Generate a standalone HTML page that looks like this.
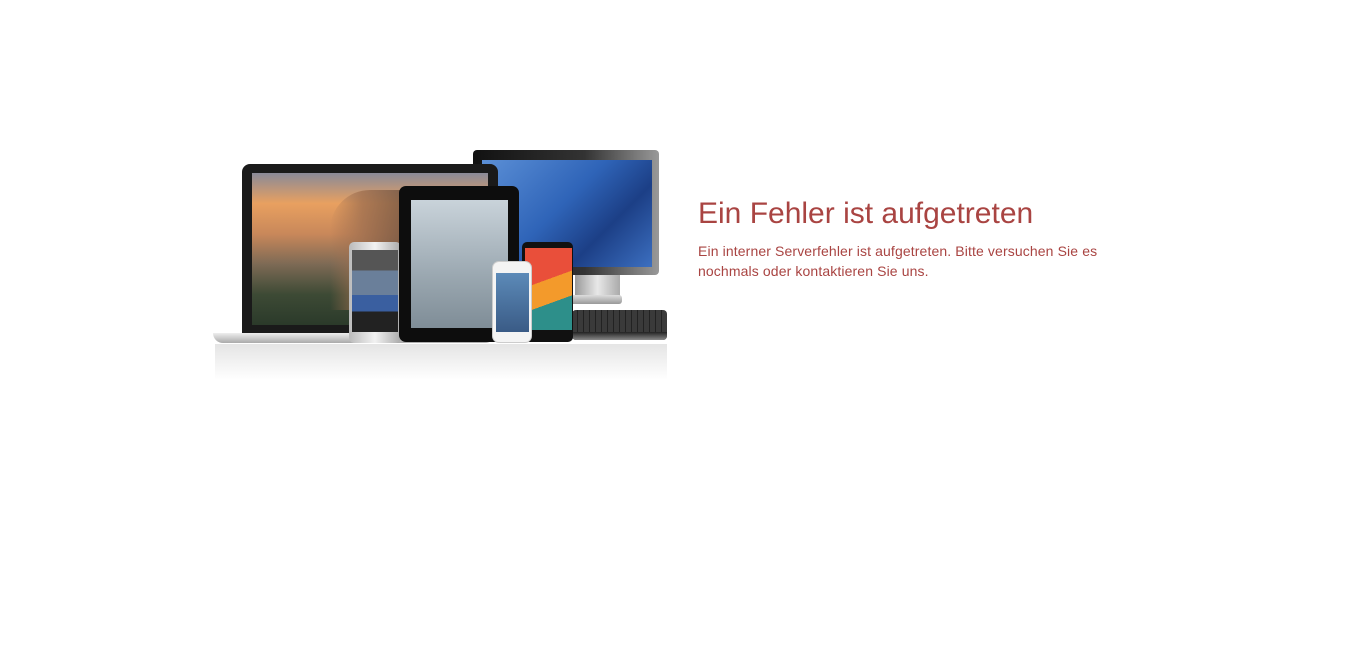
<!DOCTYPE html>
<html><head><meta charset="utf-8"><style>
html,body{margin:0;padding:0;background:#fff;width:1366px;height:659px;overflow:hidden;font-family:"Liberation Sans",Arial,sans-serif}
.a{position:absolute}
h1{position:absolute;left:698px;top:195px;margin:0;font-size:30px;font-weight:normal;color:#a94442;line-height:38px;white-space:nowrap}
p{position:absolute;left:698px;top:241px;margin:0;font-size:14px;line-height:20px;color:#a94442;width:430px;letter-spacing:0.12px}
</style></head><body>
<!-- reflection -->
<div class="a" style="left:215px;top:344px;width:452px;height:36px;background:linear-gradient(#d9d9d9,#fff);opacity:.7"></div>
<!-- monitor -->
<div class="a" style="left:575px;top:272px;width:45px;height:26px;background:linear-gradient(90deg,#999,#e8e8e8,#aaa)"></div>
<div class="a" style="left:560px;top:295px;width:62px;height:9px;border-radius:3px;background:linear-gradient(#ddd,#999)"></div>
<div class="a" style="left:473px;top:150px;width:186px;height:125px;border-radius:4px;background:linear-gradient(90deg,#111,#333 60%,#999)"></div>
<div class="a" style="left:482px;top:160px;width:170px;height:107px;background:linear-gradient(135deg,#5b8fd6,#2f64b8 45%,#1c3f86 70%,#3c6fc0)"></div>
<!-- keyboard -->
<div class="a" style="left:572px;top:310px;width:95px;height:30px;border-radius:4px;background:repeating-linear-gradient(90deg,#3a3a3a 0 5px,#222 5px 6px),#333"></div>
<div class="a" style="left:572px;top:332px;width:95px;height:8px;border-radius:0 0 4px 4px;background:linear-gradient(#222,#888)"></div>
<!-- laptop -->
<div class="a" style="left:242px;top:164px;width:256px;height:170px;border-radius:8px 8px 0 0;background:#1a1a1a"></div>
<div class="a" style="left:252px;top:173px;width:236px;height:152px;background:linear-gradient(180deg,#8a8a98 0%,#e8a060 20%,#c9885a 40%,#7d6a55 60%,#3d4a35 80%,#2b3a2a 100%)"></div>
<div class="a" style="left:330px;top:190px;width:80px;height:120px;background:linear-gradient(90deg,rgba(120,90,60,0),#a07050 40%,#6a5040);border-radius:40px 10px 0 0;opacity:.8"></div>
<div class="a" style="left:213px;top:333px;width:282px;height:10px;border-radius:0 0 12px 12px;background:linear-gradient(#eee,#aaa)"></div>
<!-- HTC -->
<div class="a" style="left:349px;top:242px;width:52px;height:101px;border-radius:5px;background:linear-gradient(90deg,#bbb,#f2f2f2,#aaa)"></div>
<div class="a" style="left:352px;top:250px;width:46px;height:82px;background:linear-gradient(#555 0 25%,#6a7f9a 25% 55%,#3a5fa0 55% 75%,#222 75%)"></div>
<!-- iPad -->
<div class="a" style="left:399px;top:186px;width:120px;height:156px;border-radius:7px;background:#0d0d0d"></div>
<div class="a" style="left:411px;top:200px;width:97px;height:128px;background:linear-gradient(#c9d3da,#9aa7b0 60%,#7f8d97)"></div>
<!-- Android -->
<div class="a" style="left:522px;top:242px;width:51px;height:100px;border-radius:5px;background:#111"></div>
<div class="a" style="left:525px;top:248px;width:47px;height:82px;background:linear-gradient(160deg,#e94f3a 0 40%,#f39a2b 40% 65%,#2d8f8a 65%)"></div>
<!-- iPhone -->
<div class="a" style="left:493px;top:262px;width:38px;height:80px;border-radius:6px;background:#f4f4f4;box-shadow:0 0 0 1px #ccc"></div>
<div class="a" style="left:496px;top:273px;width:33px;height:59px;background:linear-gradient(#5c8ab8,#3a5b86)"></div>

<h1>Ein Fehler ist aufgetreten</h1>
<p>Ein interner Serverfehler ist aufgetreten. Bitte versuchen Sie es nochmals oder kontaktieren Sie uns.</p>
</body></html>
